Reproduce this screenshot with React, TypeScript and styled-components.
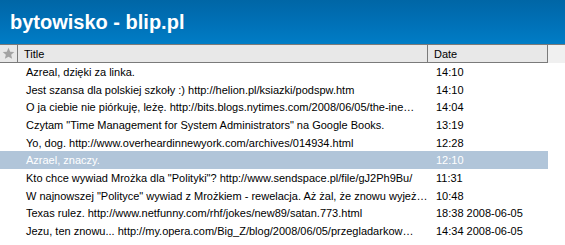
import styled, { createGlobalStyle } from 'styled-components';

const GlobalStyle = createGlobalStyle`
  html, body {
    margin: 0;
    padding: 0;
    background: #ffffff;
  }
  body {
    font-family: 'Liberation Sans', Arial, sans-serif;
  }
`;

interface entryType {
  title: string;
  date: string;
  selected?: boolean;
}

// titles are kept as the list shows them, already cut to the column
const entries: entryType[] = [
  { title: 'Azreal, dzięki za linka.', date: '14:10' },
  {
    title:
      'Jest szansa dla polskiej szkoły :) http://helion.pl/ksiazki/podspw.htm',
    date: '14:10',
  },
  {
    title:
      'O ja ciebie nie piórkuję, leżę. http://bits.blogs.nytimes.com/2008/06/05/the-ine…',
    date: '14:04',
  },
  {
    title:
      'Czytam "Time Management for System Administrators" na Google Books.',
    date: '13:19',
  },
  {
    title: 'Yo, dog. http://www.overheardinnewyork.com/archives/014934.html',
    date: '12:28',
  },
  { title: 'Azrael, znaczy.', date: '12:10', selected: true },
  {
    title:
      'Kto chce wywiad Mrożka dla "Polityki"? http://www.sendspace.pl/file/gJ2Ph9Bu/',
    date: '11:31',
  },
  {
    title:
      'W najnowszej "Polityce" wywiad z Mrożkiem - rewelacja. Aż żal, że znowu wyjeż…',
    date: '10:48',
  },
  {
    title: 'Texas rulez. http://www.netfunny.com/rhf/jokes/new89/satan.773.html',
    date: '18:38 2008-06-05',
  },
  {
    title:
      'Jezu, ten znowu... http://my.opera.com/Big_Z/blog/2008/06/05/przegladarkow…',
    date: '14:34 2008-06-05',
  },
];

const Window = styled.div`
  width: 565px;
  height: 245px;
  overflow: hidden;
  background: #ffffff;
  font-family: 'Liberation Sans', Arial, sans-serif;
  font-size: 11px;
  color: #000000;
`;

const TitleBar = styled.div`
  height: 44px;
  display: flex;
  align-items: center;
  padding-left: 10px;
  background: linear-gradient(to bottom, #0066a6 0%, #0070b6 50%, #007dc6 100%);
  color: #ffffff;
  font-family: 'Liberation Sans', Arial, sans-serif;
  font-weight: bold;
  font-size: 20px;
`;

const HeaderRow = styled.div`
  display: flex;
  height: 18px;
  border-top: 1px solid #7a7a7a;
  background: #f0f0f0;
`;

const HeaderCell = styled.div<{ $width: number }>`
  width: ${(props) => props.$width}px;
  flex: none;
  display: flex;
  align-items: center;
  justify-content: ${(props) => (props.$width < 20 ? 'center' : 'flex-start')};
  padding-left: ${(props) => (props.$width < 20 ? 0 : 6)}px;
  box-sizing: border-box;
  background: #e8e8e8;
  border-right: 1px solid #7a7a7a;
  border-bottom: 1px solid #7a7a7a;
  color: #000000;
`;

const StarIcon = () => (
  <svg width="13" height="13" viewBox="0 0 24 24">
    <path
      d="M12 1.5l3.1 7.2 7.6.6-5.8 5 1.8 7.6L12 17.9l-6.7 4 1.8-7.6-5.8-5 7.6-.6z"
      fill="#a3a3a3"
    />
  </svg>
);

const List = styled.div`
  display: flex;
  flex-direction: column;
`;

const Row = styled.div<{ $selected?: boolean }>`
  display: flex;
  width: 548px;
  height: 17.7px;
  align-items: center;
  background: ${(props) => (props.$selected ? '#b1c5d9' : 'transparent')};
  color: ${(props) => (props.$selected ? '#ffffff' : '#000000')};
`;

const Gutter = styled.div`
  width: 18px;
  flex: none;
`;

const TitleCell = styled.div`
  width: 410px;
  flex: none;
  box-sizing: border-box;
  padding: 0 0 0 8px;
  white-space: nowrap;
`;

const DateCell = styled.div`
  flex: 1;
  padding-left: 8px;
  white-space: nowrap;
  overflow: hidden;
`;

const App: React.FC = () => {
  return (
    <Window>
      <GlobalStyle />
      <TitleBar>bytowisko - blip.pl</TitleBar>
      <HeaderRow>
        <HeaderCell $width={18}>
          <StarIcon />
        </HeaderCell>
        <HeaderCell $width={410}>Title</HeaderCell>
        <HeaderCell $width={120}>Date</HeaderCell>
      </HeaderRow>
      <List>
        {entries.map((entry, i) => (
          <Row key={i} $selected={entry.selected}>
            <Gutter />
            <TitleCell>{entry.title}</TitleCell>
            <DateCell>{entry.date}</DateCell>
          </Row>
        ))}
      </List>
    </Window>
  );
};

export default App;
